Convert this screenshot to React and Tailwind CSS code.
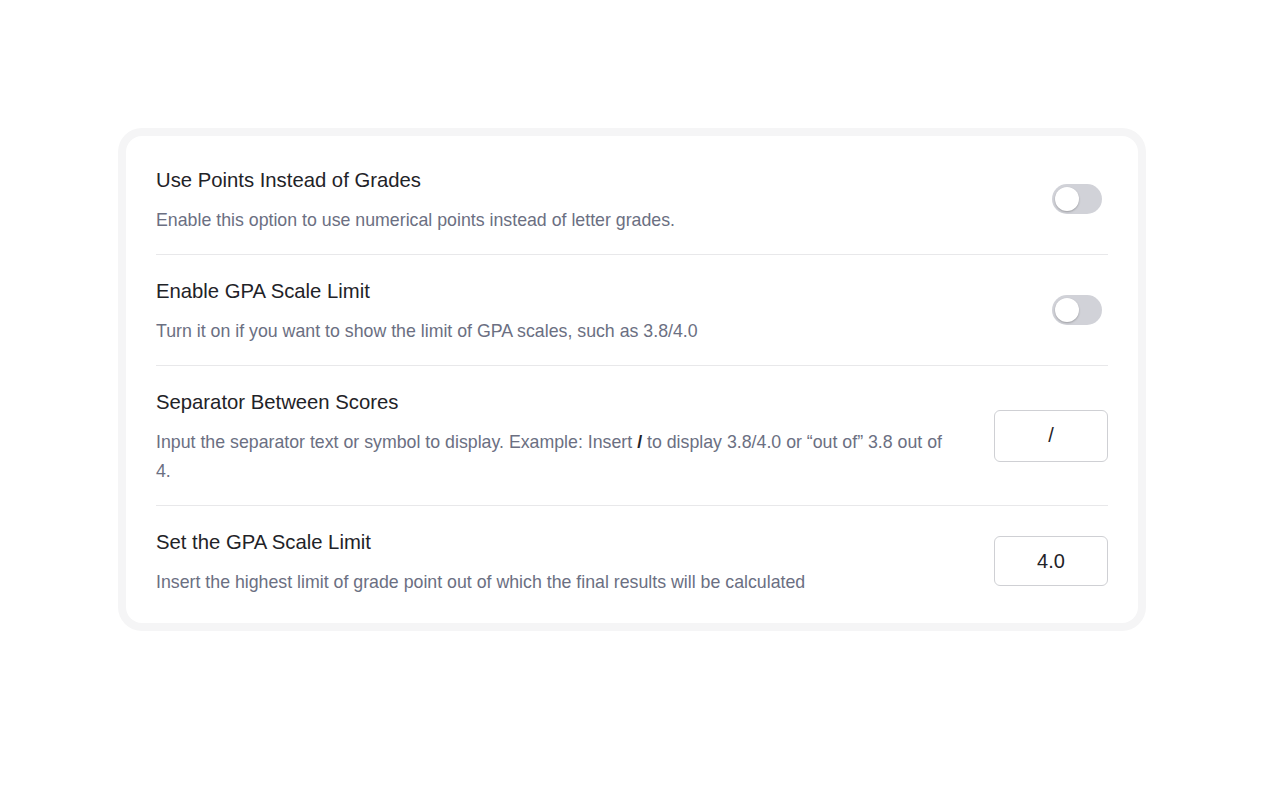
import { useState } from 'react';

function Toggle({ on, onChange }) {
    return (
        <button
            onClick={() => onChange(!on)}
            className={`relative block w-[50px] h-[30px] rounded-full transition-colors ${on ? 'bg-indigo-600' : 'bg-[#d1d2d8]'}`}
        >
            <span
                className={`absolute top-[3px] left-[3px] w-[24px] h-[24px] rounded-full bg-white shadow-[0_1px_2px_rgba(0,0,0,0.25)] transition-transform ${on ? 'translate-x-[20px]' : ''}`}
            />
        </button>
    );
}

function Row({ title, children, control, last }) {
    return (
        <div className={`flex items-center gap-10 py-[19px] ${last ? '' : 'border-b border-[#e8e8ea]'}`}>
            <div className="flex-1 min-w-0 pt-[3px]">
                <div className="text-[20.3px] leading-[28px] text-[#1f2328]">{title}</div>
                <p className="mt-[12px] text-[17.75px] leading-[29px] text-[#6b6f82]">{children}</p>
            </div>
            <div className="shrink-0 flex items-center justify-end">{control}</div>
        </div>
    );
}

export default function App() {
    const [usePoints, setUsePoints] = useState(false);
    const [scaleLimit, setScaleLimit] = useState(false);
    const [separator, setSeparator] = useState('/');
    const [limit, setLimit] = useState('4.0');

    return (
        <div className="min-h-screen bg-white pt-[128px] font-['Liberation_Sans',Arial,sans-serif]">
            <div className="mx-auto w-[1028px] rounded-[24px] bg-[#f5f5f6] p-2">
                <div className="rounded-[16px] bg-white px-[30px] pt-2 pb-[7px]">
                    <Row
                        title="Use Points Instead of Grades"
                        control={<div className="flex pr-[6px]"><Toggle on={usePoints} onChange={setUsePoints} /></div>}
                    >
                        Enable this option to use numerical points instead of letter grades.
                    </Row>
                    <Row
                        title="Enable GPA Scale Limit"
                        control={<div className="flex pr-[6px]"><Toggle on={scaleLimit} onChange={setScaleLimit} /></div>}
                    >
                        Turn it on if you want to show the limit of GPA scales, such as 3.8/4.0
                    </Row>
                    <Row
                        title="Separator Between Scores"
                        control={
                            <input
                                value={separator}
                                onChange={(e) => setSeparator(e.target.value)}
                                className="block w-[114px] h-[52px] rounded-md border border-[#cfd0d4] text-center text-[20px] text-[#1f2328] outline-none"
                            />
                        }
                    >
                        Input the separator text or symbol to display. Example: Insert <b className="text-[#1f2328]">/</b> to display 3.8/4.0 or “out of” 3.8 out of 4.
                    </Row>
                    <Row
                        title="Set the GPA Scale Limit"
                        last
                        control={
                            <input
                                value={limit}
                                onChange={(e) => setLimit(e.target.value)}
                                className="block w-[114px] h-[50px] rounded-md border border-[#cfd0d4] text-center text-[20px] text-[#1f2328] outline-none"
                            />
                        }
                    >
                        Insert the highest limit of grade point out of which the final results will be calculated
                    </Row>
                </div>
            </div>
        </div>
    );
}
